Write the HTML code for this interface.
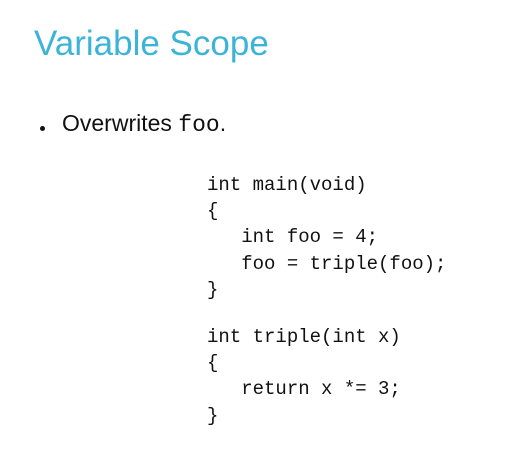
<!DOCTYPE html>
<html><head><style>
body{margin:0;width:507px;height:469px;background:#fff;position:relative;overflow:hidden;font-family:"Liberation Sans",sans-serif}
.t{position:absolute;left:34px;top:24px;font-size:35px;color:#3bb4d8;white-space:nowrap;letter-spacing:0px}
.b{position:absolute;left:62px;top:110px;font-size:23px;color:#111;white-space:nowrap}
.b .m{font-family:"Liberation Mono",monospace;font-size:23px}
.dot{position:absolute;left:40px;top:126px;width:5px;height:5px;border-radius:50%;background:#111}
pre{position:absolute;left:207px;margin:0;font-family:"Liberation Mono",monospace;font-size:19px;line-height:26.2px;color:#111}
</style></head><body>
<div class="t">Variable Scope</div>
<div class="dot"></div>
<div class="b">Overwrites <span class="m">foo</span>.</div>
<pre style="top:172px">int main(void)
{
   int foo = 4;
   foo = triple(foo);
}</pre>
<pre style="top:324px">int triple(int x)
{
   return x *= 3;
}</pre>
</body></html>
